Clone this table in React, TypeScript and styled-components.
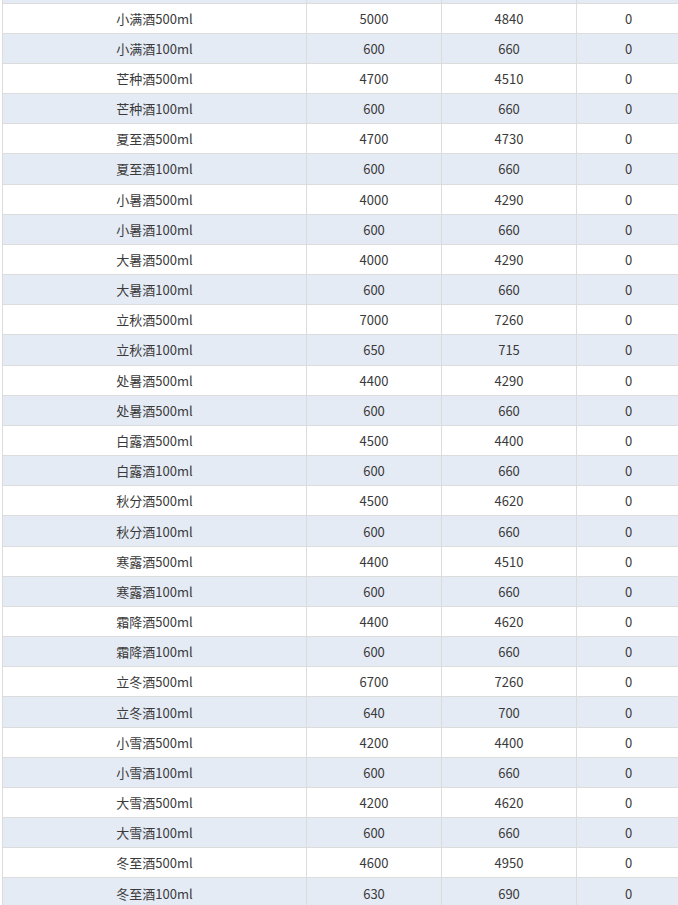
import styled, { createGlobalStyle } from "styled-components";

const GlobalStyle = createGlobalStyle`
  html, body {
    margin: 0;
    padding: 0;
    background: #fff;
    overflow: hidden;
  }
`;

type Row = [string, number, number, number];

const rows: Row[] = [
  ["小满酒500ml", 5000, 4840, 0],
  ["小满酒100ml", 600, 660, 0],
  ["芒种酒500ml", 4700, 4510, 0],
  ["芒种酒100ml", 600, 660, 0],
  ["夏至酒500ml", 4700, 4730, 0],
  ["夏至酒100ml", 600, 660, 0],
  ["小暑酒500ml", 4000, 4290, 0],
  ["小暑酒100ml", 600, 660, 0],
  ["大暑酒500ml", 4000, 4290, 0],
  ["大暑酒100ml", 600, 660, 0],
  ["立秋酒500ml", 7000, 7260, 0],
  ["立秋酒100ml", 650, 715, 0],
  ["处暑酒500ml", 4400, 4290, 0],
  ["处暑酒500ml", 600, 660, 0],
  ["白露酒500ml", 4500, 4400, 0],
  ["白露酒100ml", 600, 660, 0],
  ["秋分酒500ml", 4500, 4620, 0],
  ["秋分酒100ml", 600, 660, 0],
  ["寒露酒500ml", 4400, 4510, 0],
  ["寒露酒100ml", 600, 660, 0],
  ["霜降酒500ml", 4400, 4620, 0],
  ["霜降酒100ml", 600, 660, 0],
  ["立冬酒500ml", 6700, 7260, 0],
  ["立冬酒100ml", 640, 700, 0],
  ["小雪酒500ml", 4200, 4400, 0],
  ["小雪酒100ml", 600, 660, 0],
  ["大雪酒500ml", 4200, 4620, 0],
  ["大雪酒100ml", 600, 660, 0],
  ["冬至酒500ml", 4600, 4950, 0],
  ["冬至酒100ml", 630, 690, 0],
];

const Scroller = styled.div`
  height: 905px;
  overflow: hidden;
  padding-left: 2px;
`;

const Table = styled.table`
  border-collapse: collapse;
  table-layout: fixed;
  width: 678px;
  font-family: "Noto Sans CJK SC", "Noto Sans", sans-serif;
  font-size: 13px;
  color: #3a3a3a;
`;

const Col = styled.col<{ $w: number }>`
  width: ${(p) => p.$w}px;
`;

// the tail of the row above, scrolled out of view
const PartialRow = styled.tr`
  height: 3px;
  background: #e5ebf5;
`;

const Tr = styled.tr<{ $striped: boolean }>`
  height: 30.18px;
  background: ${(p) => (p.$striped ? "#e5ebf5" : "#ffffff")};
`;

const Td = styled.td`
  border: 1px solid #dcdcdc;
  text-align: center;
  padding: 0;
  white-space: nowrap;
`;

const EdgeTd = styled.td`
  padding: 0;
  border-left: 1px solid #dcdcdc;
  border-right: 1px solid #dcdcdc;
`;

export default function App() {
  return (
    <>
      <GlobalStyle />
      <Scroller>
        <Table>
          <colgroup>
            <Col $w={304} />
            <Col $w={135} />
            <Col $w={135} />
            <Col $w={104} />
          </colgroup>
          <tbody>
            <PartialRow>
              <EdgeTd />
              <EdgeTd />
              <EdgeTd />
              <EdgeTd />
            </PartialRow>
            {rows.map((r, i) => (
              <Tr key={i} $striped={i % 2 === 1}>
                <Td>{r[0]}</Td>
                <Td>{r[1]}</Td>
                <Td>{r[2]}</Td>
                <Td>{r[3]}</Td>
              </Tr>
            ))}
          </tbody>
        </Table>
      </Scroller>
    </>
  );
}
